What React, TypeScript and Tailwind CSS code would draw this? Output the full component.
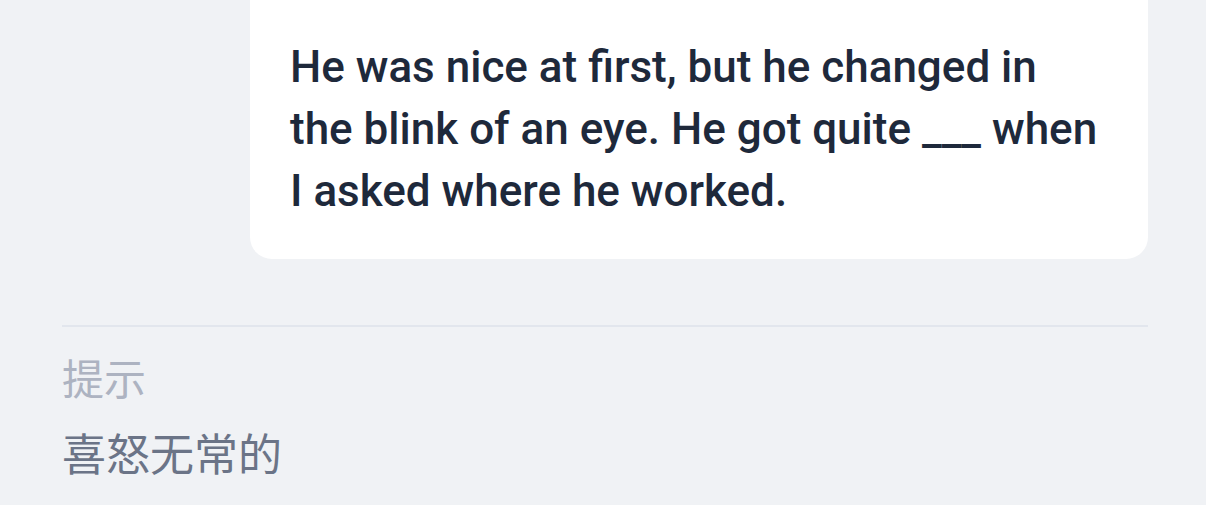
export default function App() {
  return (
    <div className="h-[505px] w-[1206px] overflow-hidden bg-[#f0f2f5] pl-[62px] pr-[58px] font-['Roboto','Noto_Sans_CJK_SC',sans-serif]">
      {/* Question bubble */}
      <div className="ml-[188px] -mt-[20px] rounded-[22px] bg-white pl-[40px] pr-[42px] pt-[56px] pb-[37px]">
        <p className="text-[44px] font-medium leading-[62px] text-[#1e293b]">
          He was nice at first, but he changed in the blink of an eye. He got quite ___ when I asked where he worked.
        </p>
      </div>

      {/* Hint */}
      <div className="mt-[66px] border-t-2 border-[#e2e6ed] pt-[29px]">
        <div className="text-[42px] leading-[50px] text-[#adb3c1]">提示</div>
        <div className="mt-[25px] text-[44px] leading-[50px] text-[#6b7487]">喜怒无常的</div>
      </div>
    </div>
  );
}
